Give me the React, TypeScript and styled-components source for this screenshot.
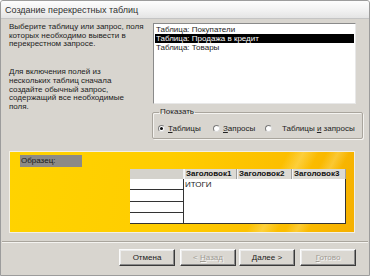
import React from 'react'
import styled, { createGlobalStyle } from 'styled-components'

const GlobalStyle = createGlobalStyle`
    html, body {
        margin: 0;
        padding: 0;
        background: #ffffff;
    }

    body {
        font-family: "Liberation Sans", Arial, sans-serif;
        font-size: 8px;
        color: #1a1a1a;
    }
`

const Window = styled.div`
    width: 370px;
    height: 276px;
    box-sizing: border-box;
    border: 1px solid #9c9c9c;
    border-radius: 3px 3px 0 0;
    background: #d8d5cf;
    display: flex;
    flex-direction: column;
    overflow: hidden;
`

const TitleBar = styled.div`
    height: 17px;
    flex-shrink: 0;
    display: flex;
    align-items: center;
    padding-left: 4px;
    font-size: 9px;
    color: #303030;
    background: linear-gradient(#fdfdfd, #f0f0f0 60%, #e4e4e4);
    border-bottom: 1px solid #c4c4c4;
`

const Body = styled.div`
    flex: 1;
    display: flex;
    flex-direction: column;
    padding: 4px 13px 0 8px;
`

const Top = styled.div`
    display: grid;
    grid-template-columns: 136px 1fr;
    column-gap: 8px;
`

const Hint = styled.div`
    display: flex;
    flex-direction: column;
    gap: 19px;
`

const Para = styled.p`
    margin: 0;
    line-height: 8.7px;
    color: #222;
    white-space: nowrap;
`

const RightCol = styled.div`
    display: flex;
    flex-direction: column;
`

const ListBox = styled.div`
    height: 81px;
    box-sizing: border-box;
    background: #ffffff;
    border: 1px solid #8a8a8a;
    border-right-color: #e8e8e8;
    border-bottom-color: #e8e8e8;
    padding: 1px 1px;
`

const ListItem = styled.div<{ $selected?: boolean }>`
    height: 9px;
    line-height: 9px;
    padding-left: 1px;
    white-space: nowrap;
    background: ${({ $selected }) => ($selected ? '#000000' : 'transparent')};
    color: ${({ $selected }) => ($selected ? '#ffffff' : '#222222')};
`

const Group = styled.fieldset`
    margin: 4px -7px 0 -1px;
    padding: 0 0 0 5px;
    height: 31px;
    box-sizing: border-box;
    border: 1px solid #a9a59d;
    box-shadow: 1px 1px 0 #f4f3f0, inset 1px 1px 0 #f4f3f0;
    border-radius: 2px;
`

const Legend = styled.legend`
    padding: 0 1px;
    margin-left: 1px;
    line-height: 8px;
    height: 8px;
    color: #222;
`

const RadioRow = styled.div`
    display: flex;
    align-items: center;
    height: 9px;
    margin-top: 8px;
`

const RadioLabel = styled.label<{ $width: number }>`
    display: flex;
    align-items: center;
    gap: 3px;
    width: ${({ $width }) => $width}px;
    white-space: nowrap;
    color: #222;
`

const RadioDot = styled.span<{ $checked?: boolean }>`
    width: 7px;
    height: 7px;
    box-sizing: border-box;
    border-radius: 50%;
    background: #ffffff;
    border: 1px solid #7a7a7a;
    border-right-color: #dcdcdc;
    border-bottom-color: #dcdcdc;
    display: flex;
    align-items: center;
    justify-content: center;
    flex-shrink: 0;

    &::after {
        content: '';
        width: 3px;
        height: 3px;
        border-radius: 50%;
        background: ${({ $checked }) => ($checked ? '#111' : 'transparent')};
    }
`

const WideText = styled.span`
    margin-left: 7px;
`

const Key = styled.span`
    text-decoration: underline;
`

const SamplePanel = styled.div`
    margin-top: 12px;
    height: 82px;
    box-sizing: border-box;
    margin-right: 1px;
    border: 1px solid #f2efe6;
    background:
        linear-gradient(118deg, transparent 72%, rgba(255, 240, 170, 0.35) 76%, transparent 80%),
        linear-gradient(118deg, transparent 82%, rgba(255, 240, 170, 0.3) 85%, transparent 88%),
        linear-gradient(100deg, #ffd300 0%, #ffcd00 45%, #fbbb00 85%, #f5b000 100%);
    padding: 3px 0 0 10px;
    display: flex;
    flex-direction: column;
`

const SampleLabel = styled.div`
    width: 62px;
    height: 12px;
    line-height: 12px;
    background: #8c8a86;
    color: #1a1a1a;
    padding-left: 1px;
    box-sizing: border-box;
`

const Grid = styled.div`
    margin: 2px 0 0 110px;
    display: grid;
    grid-template-columns: 54px 53px 55px 54px;
    grid-template-rows: 10px 45px;
    width: 216px;
`

const Corner = styled.div`
    background: #d4d2cc;
    border-right: 1px solid #f0f0f0;
`

const HeadCell = styled.div`
    background: #dcdad4;
    border-left: 1px solid #f4f4f4;
    border-right: 1px solid #a0a0a0;
    font-weight: bold;
    font-size: 8px;
    line-height: 10px;
    padding-left: 1px;
    white-space: nowrap;
    overflow: hidden;
    color: #111;
`

const Selectors = styled.div`
    display: flex;
    flex-direction: column;
    border-right: 1px solid #333;
`

const SelectorCell = styled.div`
    flex: 1;
    background: #ffffff;
    border-bottom: 1px solid #333;
`

const DataArea = styled.div`
    grid-column: span 3;
    background: #ffffff;
    border-right: 1px solid #333;
    border-bottom: 1px solid #333;
    padding: 1px 0 0 1px;
    line-height: 9px;
    color: #222;
`

const Separator = styled.div`
    margin-top: 8px;
    height: 1px;
    background: #a9a59d;
    border-bottom: 1px solid #f4f3f0;
    margin-left: -7px;
    margin-right: -12px;
`

const ButtonRow = styled.div`
    display: flex;
    justify-content: flex-end;
    margin-top: 6px;
`

const Button = styled.button<{ $gap?: number }>`
    width: 56px;
    height: 17px;
    margin-left: ${({ $gap }) => $gap ?? 0}px;
    padding: 0;
    font-family: inherit;
    font-size: 8px;
    background: #dad7d1;
    color: #1a1a1a;
    border: 1px solid;
    border-color: #fbfbfb #3a3a3a #3a3a3a #fbfbfb;
    box-shadow: inset -1px -1px 0 #8a8a8a, inset 1px 1px 0 #ececec;

    &:disabled {
        color: #a09c94;
        text-shadow: 1px 1px 0 #f6f6f6;
    }
`

export default function App() {
    return (
        <>
            <GlobalStyle />
            <Window>
                <TitleBar>Создание перекрестных таблиц</TitleBar>
                <Body>
                    <Top>
                        <Hint>
                            <Para>
                                Выберите таблицу или запрос, поля<br />
                                которых необходимо вывести в<br />
                                перекрестном запросе.
                            </Para>
                            <Para>
                                Для включения полей из<br />
                                нескольких таблиц сначала<br />
                                создайте обычный запрос,<br />
                                содержащий все необходимые<br />
                                поля.
                            </Para>
                        </Hint>
                        <RightCol>
                            <ListBox>
                                <ListItem>Таблица: Покупатели</ListItem>
                                <ListItem $selected>Таблица: Продажа в кредит</ListItem>
                                <ListItem>Таблица: Товары</ListItem>
                            </ListBox>
                            <Group>
                                <Legend>Показать</Legend>
                                <RadioRow>
                                    <RadioLabel $width={55}>
                                        <RadioDot $checked />
                                        <span><Key>Т</Key>аблицы</span>
                                    </RadioLabel>
                                    <RadioLabel $width={52}>
                                        <RadioDot />
                                        <span><Key>З</Key>апросы</span>
                                    </RadioLabel>
                                    <RadioLabel $width={95}>
                                        <RadioDot />
                                        <WideText>Таблицы <Key>и</Key> запросы</WideText>
                                    </RadioLabel>
                                </RadioRow>
                            </Group>
                        </RightCol>
                    </Top>
                    <SamplePanel>
                        <SampleLabel>Образец:</SampleLabel>
                        <Grid>
                            <Corner />
                            <HeadCell>Заголовок1</HeadCell>
                            <HeadCell>Заголовок2</HeadCell>
                            <HeadCell>Заголовок3</HeadCell>
                            <Selectors>
                                <SelectorCell />
                                <SelectorCell />
                                <SelectorCell />
                                <SelectorCell />
                            </Selectors>
                            <DataArea>ИТОГИ</DataArea>
                        </Grid>
                    </SamplePanel>
                    <Separator />
                    <ButtonRow>
                        <Button>Отмена</Button>
                        <Button $gap={5} disabled>&lt; <Key>Н</Key>азад</Button>
                        <Button $gap={3}><Key>Д</Key>алее &gt;</Button>
                        <Button $gap={5} disabled><Key>Г</Key>отово</Button>
                    </ButtonRow>
                </Body>
            </Window>
        </>
    )
}
